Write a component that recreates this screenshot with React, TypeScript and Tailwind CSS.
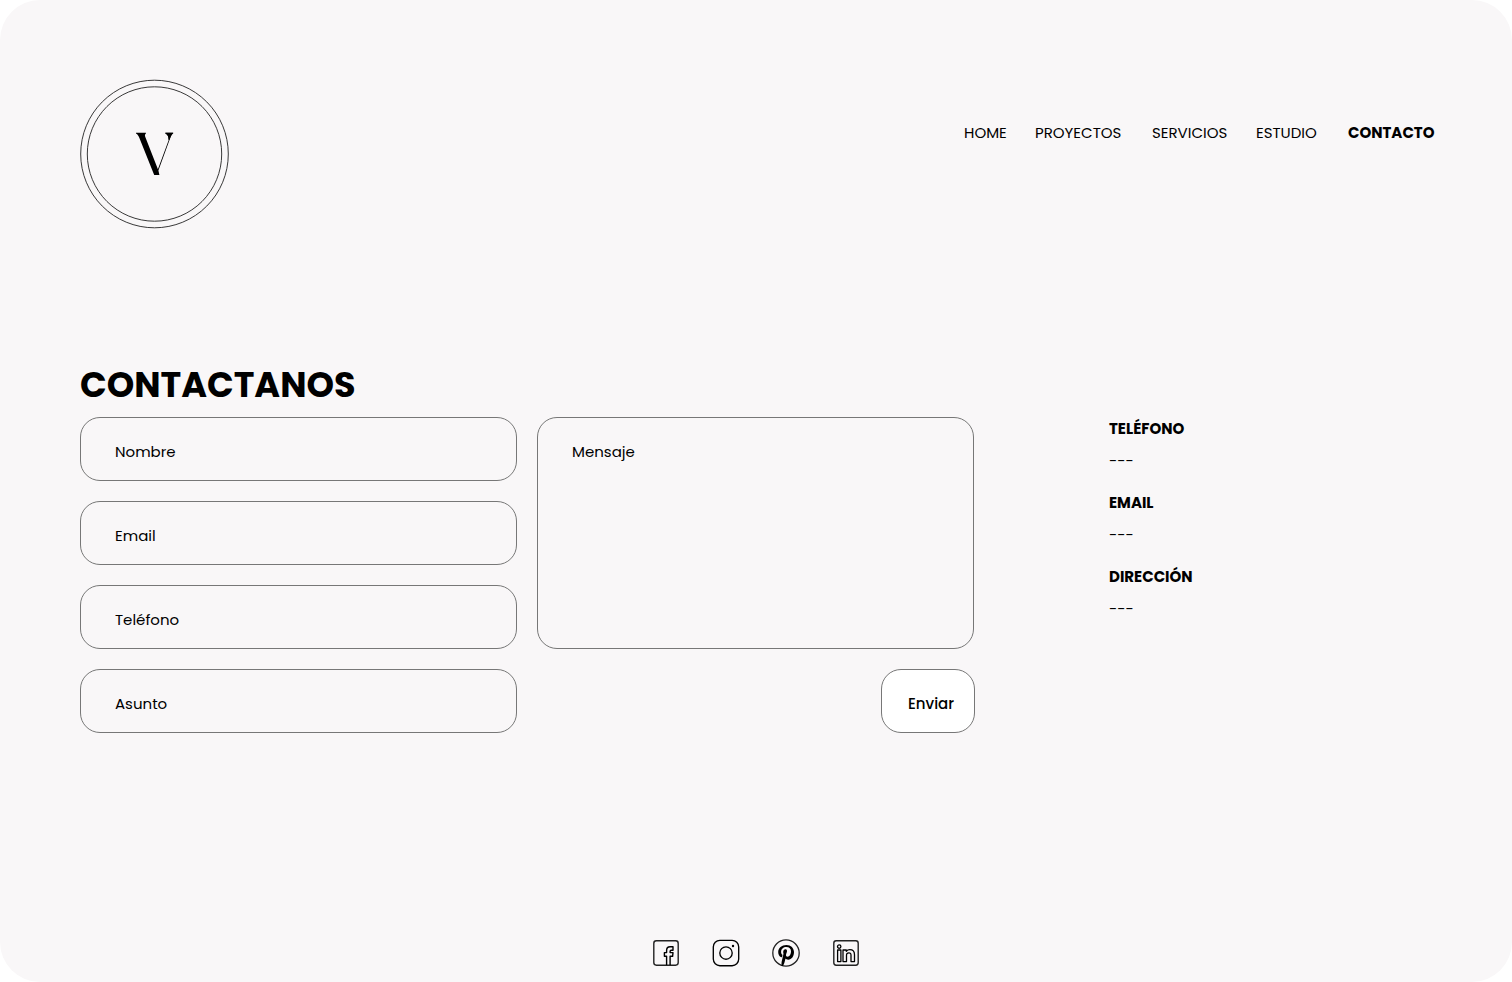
const navItems = [
  { label: 'HOME', style: 'w-[71px]' },
  { label: 'PROYECTOS', style: 'w-[117px]' },
  { label: 'SERVICIOS', style: 'w-[104px]' },
  { label: 'ESTUDIO', style: 'w-[92px]' },
  { label: 'CONTACTO', style: 'w-[88px] font-bold' },
];

const fields = ['Nombre', 'Email', 'Teléfono', 'Asunto'];

const details = ['TELÉFONO', 'EMAIL', 'DIRECCIÓN'];

function Logo() {
  return (
    <svg width="149" height="149" viewBox="0 0 149 149" fill="none" className="overflow-visible">
      <circle cx="74.5" cy="74" r="73.8" stroke="#222" strokeWidth="0.9" />
      <circle cx="74.5" cy="74" r="67.2" stroke="#222" strokeWidth="0.9" />
      <path
        d="M56 52.7H65.9V53.4C64.8 54.2 64.7 55.4 65.4 57.2L77.9 89.3L88.9 59.6C89 57 87.9 54.8 85.4 53.4V52.7H93.2V53.4C91.4 54.6 90.6 57 89.7 59.6L78.4 90.6L79.4 95H74.2L59.6 58.4C58.6 56 57.8 54.4 56 53.4Z"
        fill="#000"
      />
      <path d="M85.4 52.7H93.2C91.2 54.6 90.4 57 89.6 59.8H88.3C88.6 57 87.9 54.6 85.4 53.4Z" fill="#000" />
    </svg>
  );
}

function Facebook() {
  return (
    <svg width="28" height="28" viewBox="0 0 28 28" fill="none" stroke="#222" strokeWidth="1.4" strokeLinejoin="round">
      <rect x="1.8" y="1.8" width="24.4" height="24.4" rx="2.6" />
      <path d="M14.6 26V17.3H12.4V13.6H14.6V11.5C14.6 9 16 7.8 18.1 7.8H21V11.2H19.3C18.5 11.2 18.1 11.7 18.1 12.5V13.6H21L20.6 17.3H18.1V26" stroke="#000" />
    </svg>
  );
}

function Instagram() {
  return (
    <svg width="28" height="28" viewBox="0 0 28 28" fill="none" stroke="#000" strokeWidth="1.35">
      <rect x="1.3" y="1.3" width="25.4" height="25.4" rx="6.6" />
      <circle cx="14" cy="14" r="6.2" />
      <circle cx="21" cy="7" r="1.2" fill="#000" stroke="none" />
    </svg>
  );
}

function Pinterest() {
  return (
    <svg width="28" height="28" viewBox="0 0 28 28" fill="none">
      <circle cx="14" cy="14" r="13.2" stroke="#222" strokeWidth="1.3" />
      <path
        d="M14.4 5.9C9.7 5.9 6.2 9 6.2 12.9C6.2 15.3 7.3 17.4 9.2 18.2C9.7 18.4 10 18.2 10.1 17.8L10.4 16.5C10.5 16.1 10.4 15.9 10.2 15.6C9.5 14.9 9.1 14.1 9.1 12.9C9.1 10.2 11.3 8.1 14.4 8.1C17.3 8.1 19 9.8 19 12.3C19 15.3 17.6 17.7 15.6 17.7C14.5 17.7 13.8 16.8 14 15.7C14.3 14.4 15 13 15 11.9C15 10.9 14.4 10.2 13.4 10.2C12.1 10.2 11.2 11.4 11.2 13C11.2 14 11.5 14.7 11.5 14.7L9.8 22C9.4 23.7 9.5 25.5 9.6 27L11 27.1C11.6 26 12.3 24.4 12.6 23.1L13.5 19.5C14 20.2 15.1 20.7 16.2 20.7C19.7 20.7 22 17.4 22 13.1C22 9.1 19 5.9 14.4 5.9Z"
        fill="#000"
      />
    </svg>
  );
}

function Linkedin() {
  return (
    <svg width="28" height="28" viewBox="0 0 28 28" fill="none" stroke="#000" strokeWidth="1.3" strokeLinejoin="round">
      <rect x="1.8" y="1.8" width="24.4" height="24.4" rx="2.4" stroke="#222" strokeWidth="1.4" />
      <circle cx="7.2" cy="7.6" r="1.7" />
      <path d="M5.6 11H8.9V22.6H5.6ZM11 11H14.3V12.3C15 11.3 16.1 10.6 17.8 10.6C21 10.6 22.5 12.6 22.5 15.7V22.6H19V16.3C19 14.7 18.3 13.8 16.8 13.8C15.3 13.8 14.5 14.9 14.5 16.3V22.6H11Z" />
    </svg>
  );
}

export default function App() {
  return (
    <div className="h-[982px] w-[1512px] overflow-hidden bg-white font-['Poppins','Inter',sans-serif] text-[15px] leading-6 text-black">
      <div className="flex h-full flex-col rounded-[40px] bg-[#f9f7f8] pt-20">
        <header className="flex h-[149px] justify-between pr-[76px] pl-20">
          <Logo />
          <nav className="mt-[41px] flex">
            {navItems.map((item) => (
              <a key={item.label} href="#" className={item.style}>{item.label}</a>
            ))}
          </nav>
        </header>

        <main className="mt-[131px] pl-20">
          <h1 className="h-[57px] pt-[3px] text-[35px] leading-[44px] font-bold">CONTACTANOS</h1>
          <div className="flex">
            <form className="grid w-[895px] grid-cols-[437px_437px] grid-rows-[64px_64px_64px_64px] gap-5">
              {fields.map((label) => (
                <input
                  key={label}
                  placeholder={label}
                  className="col-start-1 rounded-[20px] border border-[#777] bg-transparent px-[34px] pt-[5px] placeholder:text-black"
                />
              ))}
              <textarea
                placeholder="Mensaje"
                className="col-start-2 row-span-3 row-start-1 resize-none rounded-[20px] border border-[#777] bg-transparent px-[34px] pt-[22px] placeholder:text-black"
              />
              <button
                type="button"
                className="col-start-2 row-start-4 -mr-px w-[94px] justify-self-end rounded-[20px] border border-[#777] bg-white pt-[5px] pl-[6px] font-medium"
              >
                Enviar
              </button>
            </form>
            <dl className="ml-[134px] flex flex-col">
              {details.map((label) => (
                <div key={label} className="h-[74px]">
                  <dt className="font-bold">{label}</dt>
                  <dd className="mt-2">---</dd>
                </div>
              ))}
            </dl>
          </div>
        </main>

        <footer className="mt-auto flex justify-center gap-8 pb-[15px]">
          <Facebook />
          <Instagram />
          <Pinterest />
          <Linkedin />
        </footer>
      </div>
    </div>
  );
}
